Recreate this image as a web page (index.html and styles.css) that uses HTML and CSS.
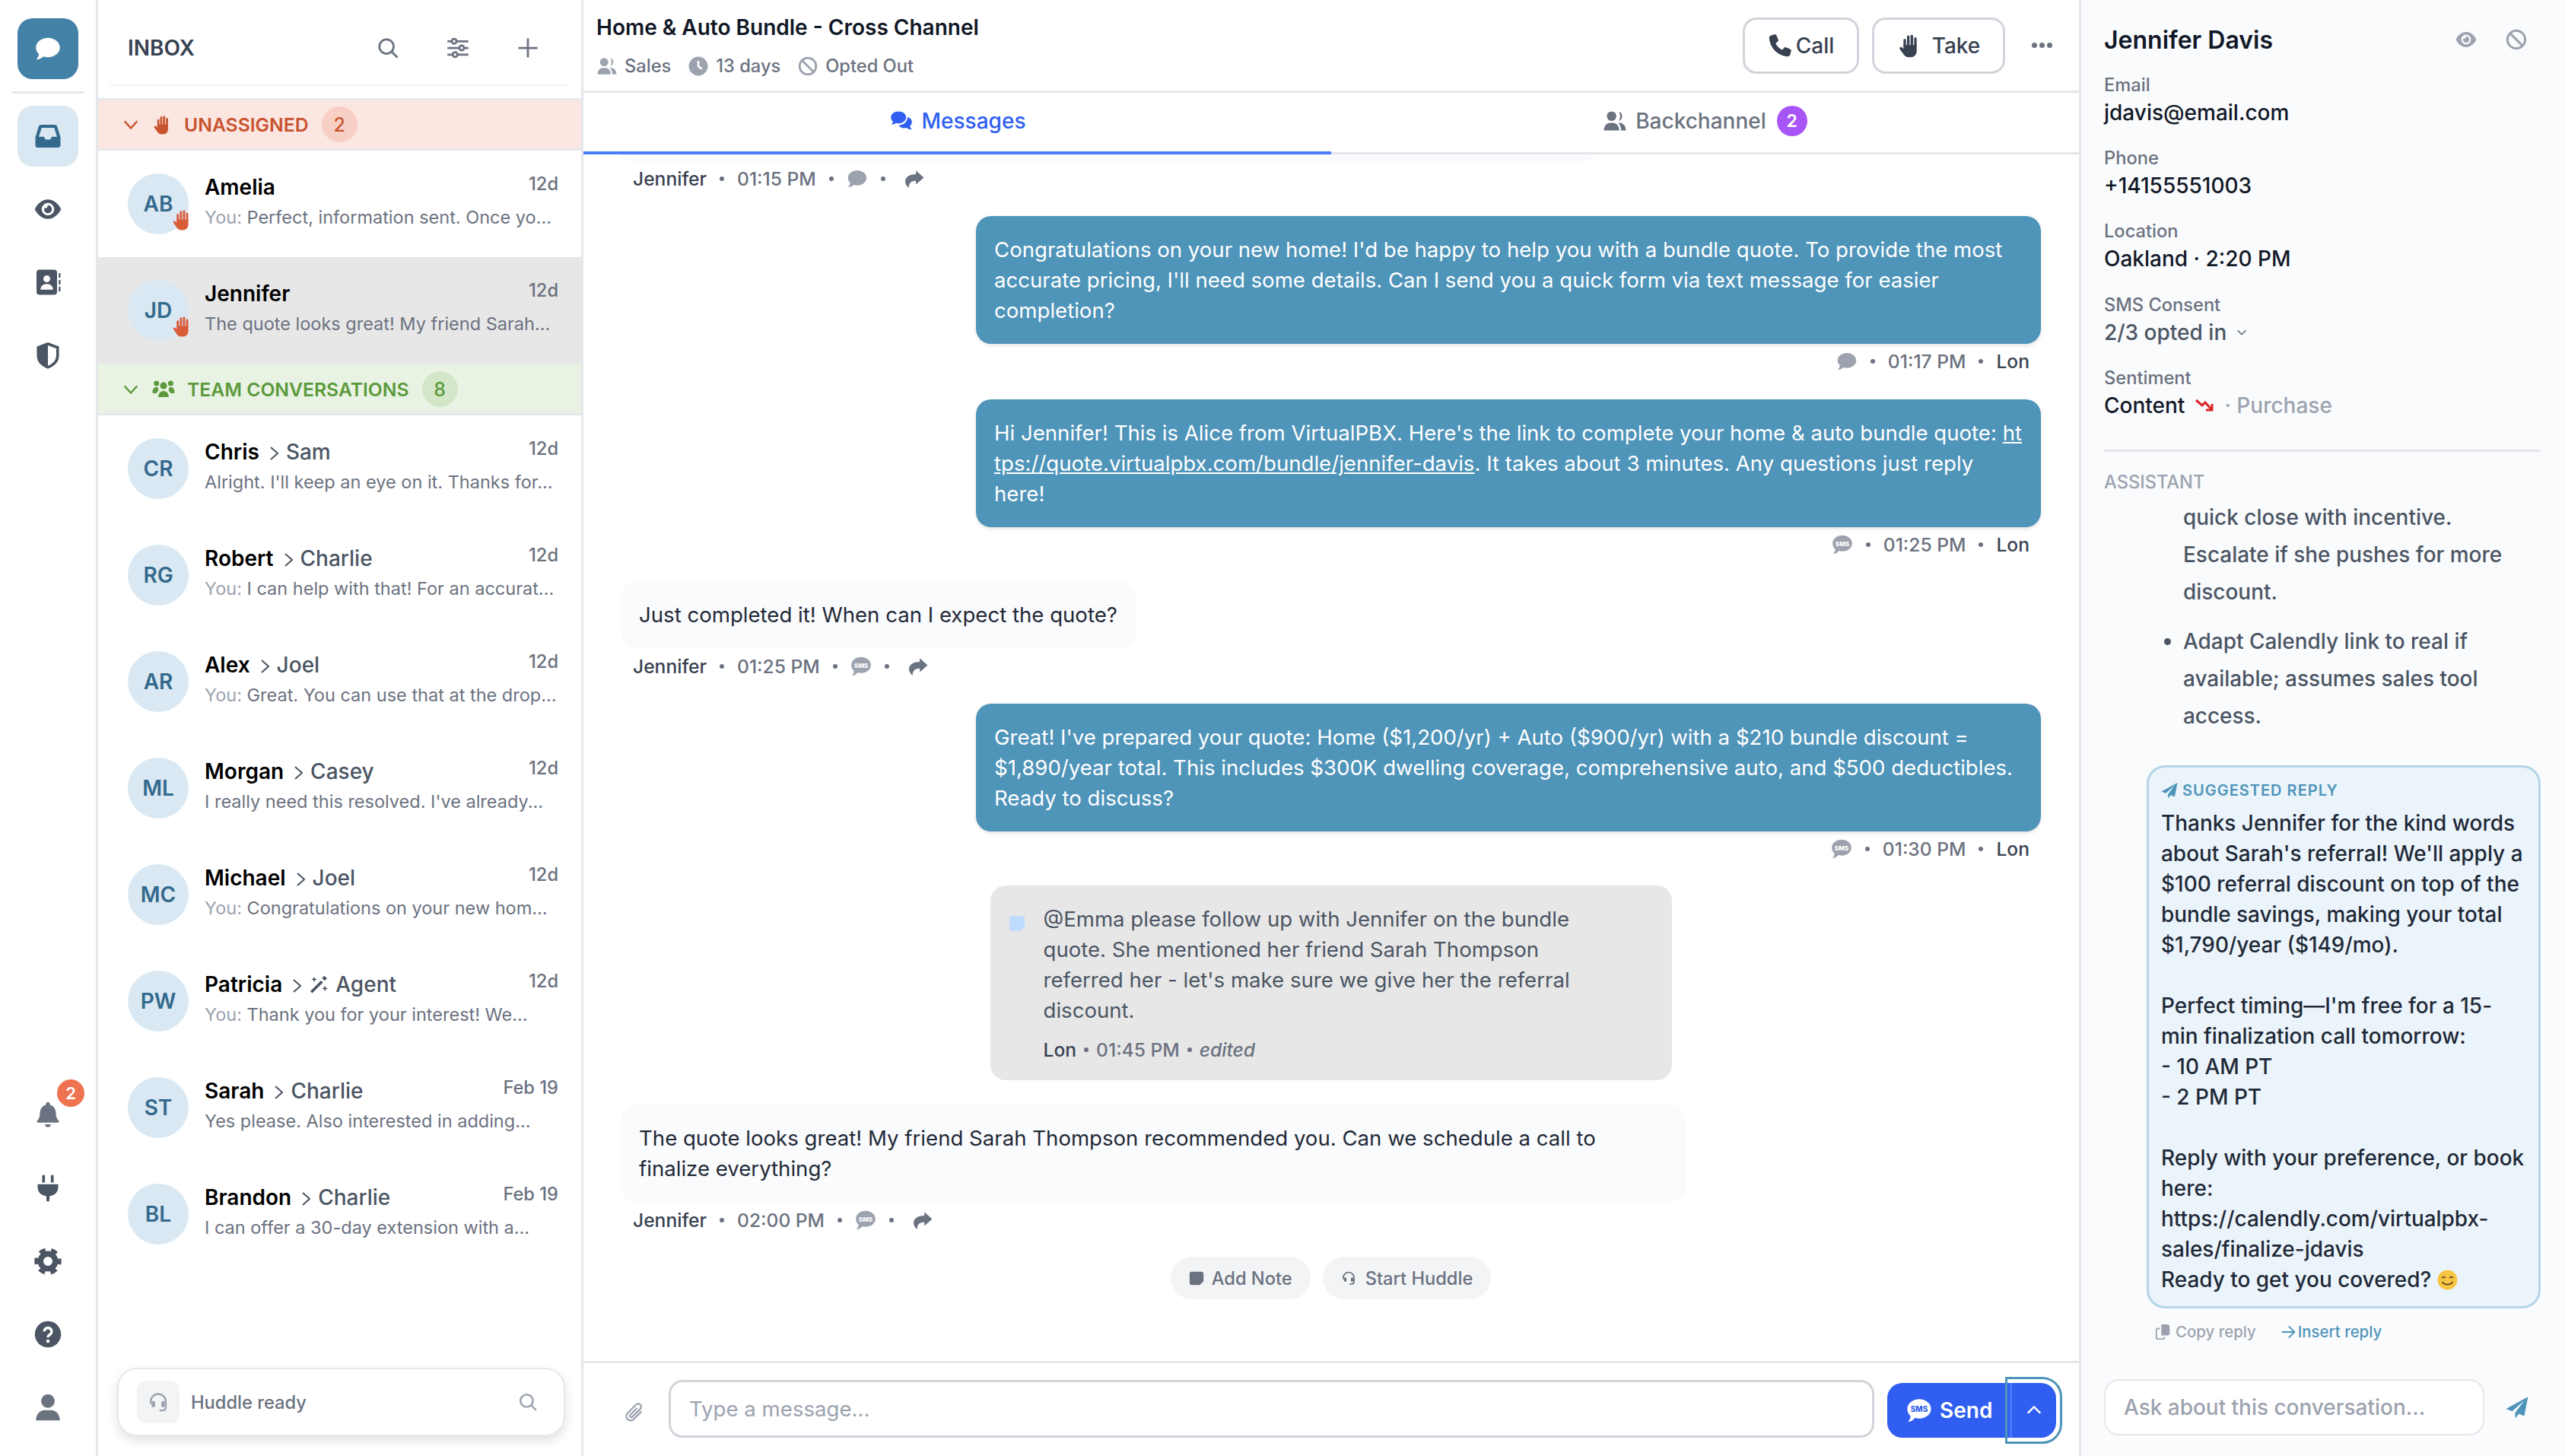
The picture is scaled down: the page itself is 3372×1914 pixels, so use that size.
FILE: index.html
```html
<!DOCTYPE html>
<html lang="en">
<head>
    <meta charset="UTF-8">
    <title>Inbox</title>
    <link rel="stylesheet" href="styles.css">
</head>
<body>
    <svg class="defs">
        <symbol id="i-comment" viewBox="0 0 24 24"><path d="M12 2.500c5.700 0 10.500 3.700 10.500 8.500s-4.800 8.500-10.500 8.500c-1.300 0-2.600-.2-3.700-.6C6.900 20 4.800 21.500 2.300 21.500c-.3 0-.4-.3-.2-.5 1-1.100 1.700-2.600 2-4.200C2.500 15.300 1.500 13.300 1.500 11c0-4.800 4.800-8.500 10.500-8.500z"/></symbol>
        <symbol id="i-sms" viewBox="0 0 24 24"><path d="M12 1.500c6 0 11 3.900 11 9s-5 9-11 9c-1.300 0-2.600-.2-3.700-.6C6.900 20.500 4.800 22.500 2.300 22.500c-.3 0-.4-.3-.2-.5 1-1.100 1.700-3 2-4.700C2.200 15.700 1 13.300 1 10.500c0-5.100 5-9 11-9z"/><text class="sms-text" x="12" y="13.300" text-anchor="middle">SMS</text></symbol>
        <symbol id="i-inbox" viewBox="0 0 24 24"><path fill-rule="evenodd" d="M6 2h12c1 0 1.800.6 2.100 1.500L23 13v7c0 1.200-1 2-2 2H3c-1 0-2-.8-2-2v-7l2.900-9.500C4.200 2.600 5 2 6 2zm.5 2.700L4 12.500h4.500l1.500 2.500h4l1.500-2.500H20l-2.500-7.800z"/></symbol>
        <symbol id="i-eye" viewBox="0 0 24 24"><path fill-rule="evenodd" d="M12 3.500C6 3.500 2 8.500.5 12 2 15.500 6 20.500 12 20.500s10-5 11.500-8.500C22 8.500 18 3.500 12 3.500zm0 3a5.500 5.500 0 1 1 0 11 5.500 5.500 0 0 1 0-11z"/><path d="M12 8.500a3.500 3.500 0 1 1-3.300 2.400c.7.600 2.200.300 2.600-.400.300-.5.300-1.300.700-2z"/></symbol>
        <symbol id="i-book" viewBox="0 0 24 24"><path fill-rule="evenodd" d="M4.500 1h13C19 1 20 2 20 3.500v17c0 1.500-1 2.500-2.500 2.500h-13C3 23 2 22 2 20.500v-17C2 2 3 1 4.500 1zM11 6a3 3 0 1 0 0 6 3 3 0 0 0 0-6zM5.500 18.500h11c0-3-2.200-5-5.500-5s-5.500 2-5.500 5z"/><path d="M21.500 4h1.500v4h-1.500zM21.500 10h1.500v4h-1.500zM21.500 16h1.500v4h-1.500z"/></symbol>
        <symbol id="i-shield" viewBox="0 0 24 24"><path d="M12 2 3.500 5.200v7C3.500 17 7 20.600 12 22.500c5-1.900 8.500-5.500 8.500-10.300v-7z" fill="none" stroke="currentColor" stroke-width="2.400"/><path d="M12 2 3.500 5.200v7C3.500 17 7 20.600 12 22.500z"/></symbol>
        <symbol id="i-bell" viewBox="0 0 24 24"><path d="M12 .5a1.800 1.800 0 0 0-1.700 2.300C7 3.700 5 6.700 5 10.300c0 3.200-1 5-2.400 6.500-.6.700-.2 1.700.8 1.700h17.200c1 0 1.400-1 .8-1.700C20 15.300 19 13.500 19 10.300c0-3.600-2-6.600-5.300-7.500A1.800 1.800 0 0 0 12 .5zM9.500 20a2.500 2.500 0 0 0 5 0z"/></symbol>
        <symbol id="i-plug" viewBox="0 0 24 24"><path d="M7 .5h2.400v6.500H7zM14.600.5H17v6.500h-2.400zM3 8.500h18v2.500c0 4.300-2.900 7.300-7.500 7.900L13.200 23.500h-2.400L10.500 18.900C5.900 18.300 3 15.300 3 11z"/></symbol>
        <symbol id="i-gear" viewBox="0 0 24 24"><circle cx="12" cy="12" r="6.500" fill="none" stroke="currentColor" stroke-width="5"/><circle cx="12" cy="12" r="10" fill="none" stroke="currentColor" stroke-width="3.600" stroke-dasharray="5.500 4.970" stroke-dashoffset="2.750"/></symbol>
        <symbol id="i-help" viewBox="0 0 24 24"><circle cx="12" cy="12" r="11.500"/><path d="M8.800 9.500A3.200 3.200 0 1 1 13.800 12.200c-1.100.7-1.800 1.200-1.800 2.400" fill="none" stroke="#fff" stroke-width="2.300"/><circle cx="12" cy="18" r="1.500" fill="#fff"/></symbol>
        <symbol id="i-user" viewBox="0 0 24 24"><circle cx="12" cy="6.500" r="6"/><path d="M1.500 23.500c0-5.800 3.800-9 7.500-9h6c3.700 0 7.500 3.200 7.500 9z"/></symbol>
        <symbol id="i-hand" viewBox="0 0 24 24"><path d="M7.500 13V6.500M11 11V3.200M14.500 11V2.500M18 12V5" fill="none" stroke="currentColor" stroke-width="2.500" stroke-linecap="round"/><path d="M6.300 11.500h13v6c0 3.500-2.700 6-6 6h-1.700c-2.500 0-4-1-5.200-2.800l-3.800-5.400c-.8-1.200.8-2.700 2.100-1.600l1.600 1.500z"/></symbol>
        <symbol id="i-team" viewBox="0 0 24 24"><circle cx="12" cy="8" r="3.600"/><circle cx="4.500" cy="5.500" r="2.800"/><circle cx="19.500" cy="5.500" r="2.800"/><path d="M6.500 20c0-4 2.200-6.500 5.500-6.500s5.500 2.500 5.500 6.500zM.5 14c0-2.500 1.500-4.500 4-4.500.8 0 1.400.2 2 .5-.5 1-.3 2.200.5 3.200-1.100.5-2 1.400-2.300 2.800H1.500c-.6 0-1-.3-1-.8zM23.500 14c0-2.500-1.500-4.500-4-4.500-.8 0-1.400.2-2 .5.500 1 .3 2.200-.5 3.200 1.100.5 2 1.400 2.300 2.800h3.200c.6 0 1-.3 1-.8z"/></symbol>
        <symbol id="i-users" viewBox="0 0 24 24"><circle cx="8.500" cy="7" r="5"/><path d="M16 2.200a5 5 0 0 1 0 9.600c1-1.400 1.500-3 1.500-4.800S17 3.600 16 2.200zM.5 22c0-5 3-8 6.500-8h3c3.500 0 6.500 3 6.500 8zM18.500 22c0-3.200-1-6-3-8h1.500c3.500 0 6.500 3 6.500 8z"/></symbol>
        <symbol id="i-clock" viewBox="0 0 24 24"><circle cx="12" cy="12" r="11.500"/><path d="M12 5.500V12l4.500 3.500" fill="none" stroke="#fff" stroke-width="2.400"/></symbol>
        <symbol id="i-ban" viewBox="0 0 24 24"><circle cx="12" cy="12" r="10" fill="none" stroke="currentColor" stroke-width="2.600"/><path d="M5 5l14 14" stroke="currentColor" stroke-width="2.600"/></symbol>
        <symbol id="i-comments" viewBox="0 0 24 24"><path d="M9 2c4.700 0 8 2.800 8 6.200s-3.300 6.300-8 6.300c-1 0-1.800-.1-2.600-.4C5.200 15 3.700 15.500 1.500 15.500c1-.9 1.500-2 1.600-3C1.700 11.500 1 10 1 8.200 1 4.800 4.300 2 9 2z"/><path d="M18.500 8c2.700.6 4.500 2.700 4.500 5.200 0 1.600-.7 3-1.900 4 .1 1.200.7 2.500 1.900 3.800-2.300 0-4.200-.7-5.400-1.800-.7.200-1.500.3-2.300.3-2.700 0-5-1.200-6.300-3 5 0 9.500-3.500 9.500-8.500z"/></symbol>
        <symbol id="i-phone" viewBox="0 0 24 24"><path d="M6.500 1 3 2C1.800 2.400 1.300 3.400 1.400 4.600 2.300 14.300 9.700 21.700 19.400 22.600c1.200.1 2.200-.4 2.600-1.600l1-3.500c.2-.9-.2-1.700-1-2.100l-4.100-1.700c-.7-.3-1.500-.1-2 .5l-1.700 2.100c-2.900-1.400-5.100-3.600-6.500-6.500l2.100-1.700c.6-.5.8-1.300.5-2L8.600 2c-.4-.8-1.200-1.200-2.100-1z"/></symbol>
        <symbol id="i-reply" viewBox="0 0 24 24"><path d="M14 2l9.500 8.500L14 19v-4.500c-5.500 0-8.500 2-8.800 8.500C2 20.500.5 17 1 14c.8-4.500 6-7.500 13-7.500z"/></symbol>
        <symbol id="i-clip" viewBox="0 0 24 24"><path d="M20 11.500 11.500 20c-2.200 2.200-5.300 2.200-7.200.3-1.900-1.900-1.900-5 .3-7.200l9-9c1.500-1.500 3.700-1.500 5-.2 1.300 1.300 1.300 3.500-.2 5l-8.600 8.600c-.7.700-1.800.7-2.400.1-.6-.6-.6-1.700.1-2.400l7.500-7.500" fill="none" stroke="currentColor" stroke-width="2"/></symbol>
        <symbol id="i-plane" viewBox="0 0 24 24"><path d="M23.500 1 .5 13.500l6.200 2.600L19.500 5 10 17.500v6l3.900-4.700 5.600 2.400z"/></symbol>
        <symbol id="i-copy" viewBox="0 0 24 24"><path d="M9 1h9c1.700 0 3 1.300 3 3v10c0 1.700-1.300 3-3 3H9z"/><path d="M7 7H4.500C3 7 2 8 2 9.500v10C2 21 3 22 4.500 22H11c1.500 0 2.500-1 2.500-2.500V19" fill="none" stroke="currentColor" stroke-width="2"/></symbol>
        <symbol id="i-wand" viewBox="0 0 24 24"><path d="M3 21.500 16 8.500" stroke="currentColor" stroke-width="3.400"/><path d="M18.500 1.500l3.500 3-2.500 3-3.500-3zM6.500 2.500l1 2.500 2.500 1-2.500 1-1 2.500-1-2.500L3 6l2.500-1zM19.500 13.500l1 2.500 2.500 1-2.500 1-1 2.500-1-2.500-2.500-1 2.500-1z"/></symbol>
        <symbol id="i-headset" viewBox="0 0 24 24"><path d="M3.500 14v-2.500a8.500 8.500 0 0 1 17 0V18c0 2.500-2 3.500-4 3.500h-3" fill="none" stroke="currentColor" stroke-width="2"/><rect x="4.500" y="11" width="4" height="7" rx="2"/><rect x="15.500" y="11" width="4" height="7" rx="2"/></symbol>
    </svg>

    <div class="app">
        <nav class="rail">
            <a class="rail-btn rail-btn-brand"><svg class="rail-ic"><use href="#i-comment"/></svg></a>
            <div class="rail-line"></div>
            <a class="rail-btn rail-btn-active"><svg class="rail-ic"><use href="#i-inbox"/></svg></a>
            <a class="rail-btn"><svg class="rail-ic"><use href="#i-eye"/></svg></a>
            <a class="rail-btn"><svg class="rail-ic"><use href="#i-book"/></svg></a>
            <a class="rail-btn"><svg class="rail-ic"><use href="#i-shield"/></svg></a>
            <div class="rail-bottom">
                <a class="rail-btn rail-btn-grey"><svg class="rail-ic"><use href="#i-bell"/></svg><span class="rail-badge">2</span></a>
                <a class="rail-btn"><svg class="rail-ic"><use href="#i-plug"/></svg></a>
                <a class="rail-btn"><svg class="rail-ic"><use href="#i-gear"/></svg></a>
                <a class="rail-btn"><svg class="rail-ic"><use href="#i-help"/></svg></a>
                <a class="rail-btn rail-btn-grey"><svg class="rail-ic"><use href="#i-user"/></svg></a>
            </div>
        </nav>

        <aside class="inbox">
            <div class="inbox-head">
                <h2>INBOX</h2>
                <div class="inbox-tools">
                    <svg viewBox="0 0 24 24" class="tool-ic"><circle cx="10.500" cy="10.500" r="7.500"/><path d="M16 16l6 6"/></svg>
                    <svg viewBox="0 0 24 24" class="tool-ic"><path d="M1 5h22M1 12h22M1 19h22"/><circle cx="8" cy="5" r="2.500" fill="#fff"/><circle cx="16" cy="12" r="2.500" fill="#fff"/><circle cx="9" cy="19" r="2.500" fill="#fff"/></svg>
                    <svg viewBox="0 0 24 24" class="tool-ic"><path d="M12 2v20M2 12h20"/></svg>
                </div>
            </div>

            <div class="section section-red">
                <svg viewBox="0 0 24 24" class="section-chev"><path d="M3 7l9 10 9-10"/></svg>
                <svg class="section-ic"><use href="#i-hand"/></svg>
                <span>UNASSIGNED</span>
                <b class="section-count">2</b>
            </div>
            <div class="conv">
                <div class="avatar">AB<svg class="avatar-hand"><use href="#i-hand"/></svg></div>
                <div class="conv-body">
                    <div class="conv-top"><span class="conv-name">Amelia</span><time>12d</time></div>
                    <p class="conv-text"><span class="you">You:</span> Perfect, information sent. Once yo...</p>
                </div>
            </div>
            <div class="conv conv-selected">
                <div class="avatar">JD<svg class="avatar-hand"><use href="#i-hand"/></svg></div>
                <div class="conv-body">
                    <div class="conv-top"><span class="conv-name">Jennifer</span><time>12d</time></div>
                    <p class="conv-text">The quote looks great! My friend Sarah...</p>
                </div>
            </div>

            <div class="section section-green">
                <svg viewBox="0 0 24 24" class="section-chev"><path d="M3 7l9 10 9-10"/></svg>
                <svg class="section-ic section-ic-wide"><use href="#i-team"/></svg>
                <span>TEAM CONVERSATIONS</span>
                <b class="section-count">8</b>
            </div>
            <div class="conv">
                <div class="avatar">CR</div>
                <div class="conv-body">
                    <div class="conv-top"><span class="conv-name">Chris</span><svg viewBox="6 2 12 20" class="conv-chev"><path d="M7 3l10 9-10 9"/></svg><span class="conv-to">Sam</span><time>12d</time></div>
                    <p class="conv-text">Alright. I'll keep an eye on it. Thanks for...</p>
                </div>
            </div>
            <div class="conv">
                <div class="avatar">RG</div>
                <div class="conv-body">
                    <div class="conv-top"><span class="conv-name">Robert</span><svg viewBox="6 2 12 20" class="conv-chev"><path d="M7 3l10 9-10 9"/></svg><span class="conv-to">Charlie</span><time>12d</time></div>
                    <p class="conv-text"><span class="you">You:</span> I can help with that! For an accurat...</p>
                </div>
            </div>
            <div class="conv">
                <div class="avatar">AR</div>
                <div class="conv-body">
                    <div class="conv-top"><span class="conv-name">Alex</span><svg viewBox="6 2 12 20" class="conv-chev"><path d="M7 3l10 9-10 9"/></svg><span class="conv-to">Joel</span><time>12d</time></div>
                    <p class="conv-text"><span class="you">You:</span> Great. You can use that at the drop...</p>
                </div>
            </div>
            <div class="conv">
                <div class="avatar">ML</div>
                <div class="conv-body">
                    <div class="conv-top"><span class="conv-name">Morgan</span><svg viewBox="6 2 12 20" class="conv-chev"><path d="M7 3l10 9-10 9"/></svg><span class="conv-to">Casey</span><time>12d</time></div>
                    <p class="conv-text">I really need this resolved. I've already...</p>
                </div>
            </div>
            <div class="conv">
                <div class="avatar">MC</div>
                <div class="conv-body">
                    <div class="conv-top"><span class="conv-name">Michael</span><svg viewBox="6 2 12 20" class="conv-chev"><path d="M7 3l10 9-10 9"/></svg><span class="conv-to">Joel</span><time>12d</time></div>
                    <p class="conv-text"><span class="you">You:</span> Congratulations on your new hom...</p>
                </div>
            </div>
            <div class="conv">
                <div class="avatar">PW</div>
                <div class="conv-body">
                    <div class="conv-top"><span class="conv-name">Patricia</span><svg viewBox="6 2 12 20" class="conv-chev"><path d="M7 3l10 9-10 9"/></svg><svg class="conv-wand"><use href="#i-wand"/></svg><span class="conv-to">Agent</span><time>12d</time></div>
                    <p class="conv-text"><span class="you">You:</span> Thank you for your interest! We...</p>
                </div>
            </div>
            <div class="conv">
                <div class="avatar">ST</div>
                <div class="conv-body">
                    <div class="conv-top"><span class="conv-name">Sarah</span><svg viewBox="6 2 12 20" class="conv-chev"><path d="M7 3l10 9-10 9"/></svg><span class="conv-to">Charlie</span><time>Feb 19</time></div>
                    <p class="conv-text">Yes please. Also interested in adding...</p>
                </div>
            </div>
            <div class="conv">
                <div class="avatar">BL</div>
                <div class="conv-body">
                    <div class="conv-top"><span class="conv-name">Brandon</span><svg viewBox="6 2 12 20" class="conv-chev"><path d="M7 3l10 9-10 9"/></svg><span class="conv-to">Charlie</span><time>Feb 19</time></div>
                    <p class="conv-text">I can offer a 30-day extension with a...</p>
                </div>
            </div>

            <div class="huddle">
                <span class="huddle-box"><svg class="huddle-ic"><use href="#i-headset"/></svg></span>
                <span class="huddle-text">Huddle ready</span>
                <svg viewBox="0 0 24 24" class="huddle-search"><circle cx="10.500" cy="10.500" r="7.500"/><path d="M16 16l6 6"/></svg>
            </div>
        </aside>

        <main class="main">
            <header class="main-head">
                <div>
                    <h1>Home &amp; Auto Bundle - Cross Channel</h1>
                    <div class="main-meta">
                        <span><svg class="meta-ic"><use href="#i-users"/></svg>Sales</span>
                        <span><svg class="meta-ic"><use href="#i-clock"/></svg>13 days</span>
                        <span><svg class="meta-ic"><use href="#i-ban"/></svg>Opted Out</span>
                    </div>
                </div>
                <div class="main-actions">
                    <button class="btn btn-call"><svg class="btn-ic"><use href="#i-phone"/></svg>Call</button>
                    <button class="btn btn-take"><svg class="btn-ic"><use href="#i-hand"/></svg>Take</button>
                    <span class="more"><i></i><i></i><i></i></span>
                </div>
            </header>

            <div class="tabs">
                <div class="tab tab-active"><svg class="tab-ic"><use href="#i-comments"/></svg>Messages</div>
                <div class="tab"><svg class="tab-ic"><use href="#i-users"/></svg>Backchannel<b class="tab-count">2</b></div>
            </div>

            <div class="thread">
                <div class="stub"></div>
                <div class="meta">
                    <span class="meta-who">Jennifer</span><i class="dot"></i><span>01:15 PM</span><i class="dot"></i><svg class="meta-sms"><use href="#i-comment"/></svg><i class="dot"></i><svg class="meta-reply"><use href="#i-reply"/></svg>
                </div>

                <div class="msg msg-out">
                    <div class="bubble">Congratulations on your new home! I'd be happy to help you with a bundle quote. To provide the most accurate pricing, I'll need some details. Can I send you a quick form via text message for easier completion?</div>
                    <div class="meta"><svg class="meta-sms"><use href="#i-comment"/></svg><i class="dot"></i><span>01:17 PM</span><i class="dot"></i><span class="meta-who">Lon</span></div>
                </div>

                <div class="msg msg-out">
                    <div class="bubble">Hi Jennifer! This is Alice from VirtualPBX. Here's the link to complete your home &amp; auto bundle quote: <u>ht</u><wbr><u>tps://quote.virtualpbx.com/bundle/jennifer-davis</u>. It takes about 3 minutes. Any questions just reply here!</div>
                    <div class="meta"><svg class="meta-sms"><use href="#i-sms"/></svg><i class="dot"></i><span>01:25 PM</span><i class="dot"></i><span class="meta-who">Lon</span></div>
                </div>

                <div class="msg msg-in">
                    <div class="bubble">Just completed it! When can I expect the quote?</div>
                    <div class="meta"><span class="meta-who">Jennifer</span><i class="dot"></i><span>01:25 PM</span><i class="dot"></i><svg class="meta-sms"><use href="#i-sms"/></svg><i class="dot"></i><svg class="meta-reply"><use href="#i-reply"/></svg></div>
                </div>

                <div class="msg msg-out">
                    <div class="bubble">Great! I've prepared your quote: Home ($1,200/yr) + Auto ($900/yr) with a $210 bundle discount = $1,890/year total. This includes $300K dwelling coverage, comprehensive auto, and $500 deductibles. Ready to discuss?</div>
                    <div class="meta"><svg class="meta-sms"><use href="#i-sms"/></svg><i class="dot"></i><span>01:30 PM</span><i class="dot"></i><span class="meta-who">Lon</span></div>
                </div>

                <div class="note">
                    <svg viewBox="0 0 24 24" class="note-ic"><path d="M4 1h16c1.700 0 3 1.300 3 3v13l-7 6H4c-1.700 0-3-1.300-3-3V4c0-1.700 1.300-3 3-3z"/></svg>
                    <div class="note-body">
                        <p>@Emma please follow up with Jennifer on the bundle quote. She mentioned her friend Sarah Thompson referred her - let's make sure we give her the referral discount.</p>
                        <div class="note-meta"><span class="meta-who">Lon</span><i class="dot"></i><span>01:45 PM</span><i class="dot"></i><em>edited</em></div>
                    </div>
                </div>

                <div class="msg msg-in">
                    <div class="bubble bubble-wide">The quote looks great! My friend Sarah Thompson recommended you. Can we schedule a call to finalize everything?</div>
                    <div class="meta"><span class="meta-who">Jennifer</span><i class="dot"></i><span>02:00 PM</span><i class="dot"></i><svg class="meta-sms"><use href="#i-sms"/></svg><i class="dot"></i><svg class="meta-reply"><use href="#i-reply"/></svg></div>
                </div>

                <div class="pills">
                    <span class="pill"><svg viewBox="0 0 24 24" class="pill-ic"><path d="M4 2h16c1.700 0 3 1.300 3 3v12l-6 6H4c-1.700 0-3-1.300-3-3V5c0-1.700 1.300-3 3-3z"/></svg>Add Note</span>
                    <span class="pill"><svg class="pill-ic pill-ic-wide"><use href="#i-headset"/></svg>Start Huddle</span>
                </div>
            </div>

            <div class="composer">
                <svg class="clip"><use href="#i-clip"/></svg>
                <input class="composer-input" type="text" placeholder="Type a message...">
                <div class="send">
                    <button class="send-main"><svg class="send-ic"><use href="#i-sms"/></svg>Send</button>
                    <button class="send-more"><svg viewBox="0 0 24 24" class="send-chev"><path d="M3 17l9-9 9 9"/></svg></button>
                </div>
            </div>
        </main>

        <aside class="details">
            <div class="details-head">
                <h2>Jennifer Davis</h2>
                <svg class="details-ic"><use href="#i-eye"/></svg>
                <svg class="details-ic"><use href="#i-ban"/></svg>
            </div>
            <div class="field"><label>Email</label><div>jdavis@email.com</div></div>
            <div class="field"><label>Phone</label><div>+14155551003</div></div>
            <div class="field"><label>Location</label><div>Oakland · 2:20 PM</div></div>
            <div class="field"><label>SMS Consent</label><div class="consent">2/3 opted in<svg viewBox="0 0 24 24" class="consent-chev"><path d="M4 8l8 8 8-8"/></svg></div></div>
            <div class="field"><label>Sentiment</label><div>Content<svg viewBox="0 0 24 24" class="trend"><path d="M1 5l8 7 4-4 9 10M22 10v8h-8"/></svg><span class="purchase">· Purchase</span></div></div>
            <div class="details-line"></div>
            <div class="assistant-label">ASSISTANT</div>
            <div class="assistant">
                <p class="assistant-text">quick close with incentive. Escalate if she pushes for more discount.</p>
                <ul class="assistant-list"><li>Adapt Calendly link to real if available; assumes sales tool access.</li></ul>
                <div class="suggest">
                    <div class="suggest-head"><svg class="suggest-ic"><use href="#i-plane"/></svg>SUGGESTED REPLY</div>
                    <p>Thanks Jennifer for the kind words about Sarah's referral! We'll apply a $100 referral discount on top of the bundle savings, making your total $1,790/year ($149/mo).

Perfect timing—I'm free for a 15-min finalization call tomorrow:
- 10 AM PT
- 2 PM PT

Reply with your preference, or book here:
https://calendly.com/virtualpbx-sales/finalize-jdavis
Ready to get you covered? <svg viewBox="0 0 24 24" class="smile"><circle cx="12" cy="12" r="11.500" fill="#f7c544"/><path d="M5.500 10c1-2 3-2 4 0M14.500 10c1-2 3-2 4 0" fill="none" stroke="#5b3a1a" stroke-width="1.400"/><path d="M6 14c1.500 4.500 10.500 4.500 12 0" fill="none" stroke="#5b3a1a" stroke-width="1.500"/></svg></p>
                </div>
                <div class="suggest-actions">
                    <span class="copy"><svg class="action-ic"><use href="#i-copy"/></svg>Copy reply</span>
                    <span class="insert"><svg viewBox="0 0 24 24" class="action-arrow"><path d="M2 12h20M13 3l9 9-9 9"/></svg>Insert reply</span>
                </div>
            </div>
            <div class="ask">
                <input class="ask-input" type="text" placeholder="Ask about this conversation...">
                <svg class="ask-ic"><use href="#i-plane"/></svg>
            </div>
        </aside>
    </div>
</body>
</html>
```

FILE: styles.css
```css
* {
    box-sizing: border-box;
}

body {
    margin: 0;
    font-family: Inter, "Noto Sans", sans-serif;
    color: #111827;
    background: #fff;
    overflow: hidden;
}

svg {
    fill: currentColor;
    flex: none;
}

p, h1, h2, ul {
    margin: 0;
    padding: 0;
}

.defs {
    display: none;
}

.sms-text {
    font-size: 7px;
    font-weight: 800;
    fill: var(--sms-text, #fff);
}

.app {
    display: flex;
    width: 3372px;
    height: 1914px;
}

/* left icon rail */
.rail {
    width: 129px;
    flex: none;
    display: flex;
    flex-direction: column;
    align-items: center;
    padding-top: 24px;
    border-right: 3px solid #e5e7eb;
    color: #4b5563;
}

.rail-btn {
    position: relative;
    width: 80px;
    height: 80px;
    margin-bottom: 16px;
    border-radius: 20px;
    display: flex;
    align-items: center;
    justify-content: center;
}

.rail-btn-brand {
    background: #4481a7;
    color: #fff;
    margin-bottom: 0;
}

.rail-btn-active {
    background: #d9e8f2;
    color: #33698d;
}

.rail-btn-grey {
    color: #6b7280;
}

.rail-line {
    width: 94px;
    height: 3px;
    margin: 16px 0;
    background: #e5e7eb;
}

.rail-ic {
    width: 36px;
    height: 36px;
}

.rail-badge {
    position: absolute;
    top: -7px;
    right: -8px;
    width: 36px;
    height: 36px;
    border-radius: 50%;
    background: #ef7350;
    color: #fff;
    font-size: 22px;
    font-weight: 600;
    display: flex;
    align-items: center;
    justify-content: center;
}

.rail-bottom {
    margin-top: auto;
    padding-bottom: 8px;
}

/* inbox list */
.inbox {
    width: 638px;
    flex: none;
    display: flex;
    flex-direction: column;
    border-right: 3px solid #e5e7eb;
}

.inbox-head {
    height: 113px;
    margin: 0 16px 16px 15px;
    padding: 14px 24px 0;
    flex: none;
    display: flex;
    align-items: center;
    justify-content: space-between;
    border-bottom: 2px solid #f0f1f3;
}

.inbox-head h2 {
    font-size: 28px;
    font-weight: 600;
    color: #374151;
}

.inbox-tools {
    display: flex;
    gap: 62px;
    margin-right: 15px;
}

.tool-ic {
    width: 30px;
    height: 30px;
    fill: none;
    stroke: #6b7280;
    stroke-width: 2.200;
}

.section {
    height: 69px;
    flex: none;
    display: flex;
    align-items: center;
    padding-left: 32px;
    border-top: 3px solid #e5e7eb;
    border-bottom: 3px solid #e5e7eb;
    font-size: 24.700px;
    font-weight: 600;
}

.section-red {
    background: #fbe6e1;
    color: #c8532f;
}

.section-green {
    height: 68px;
    padding-top: 2px;
    background: #e9f3e4;
    color: #5b9a3c;
    border-top: none;
}

.section-chev {
    width: 22px;
    height: 22px;
    margin-right: 17px;
    fill: none;
    stroke: currentColor;
    stroke-width: 2.600;
}

.section-ic {
    width: 26px;
    height: 30px;
    margin-right: 16px;
}

.section-ic-wide {
    width: 30px;
    margin-right: 16px;
}

.section-count {
    width: 47px;
    height: 47px;
    margin-left: 17px;
    border-radius: 50%;
    font-size: 25px;
    font-weight: 500;
    display: flex;
    align-items: center;
    justify-content: center;
}

.section-red .section-count {
    background: #f8cfc4;
}

.section-green .section-count {
    background: #d3e6c8;
}

.conv {
    height: 140px;
    flex: none;
    display: flex;
    align-items: flex-start;
    padding: 30px 30px 0 39px;
}

.conv-selected {
    background: #e7e7e7;
}

.avatar {
    position: relative;
    width: 80px;
    height: 80px;
    flex: none;
    margin-right: 21px;
    border-radius: 50%;
    background: #d9e8f2;
    color: #33698d;
    font-size: 28px;
    font-weight: 600;
    display: flex;
    align-items: center;
    justify-content: center;
}

.avatar-hand {
    position: absolute;
    right: -5px;
    bottom: 4px;
    width: 28px;
    height: 30px;
    color: #d95c39;
}

.conv-body {
    flex: 1;
    min-width: 0;
}

.conv-top {
    display: flex;
    align-items: center;
    height: 36px;
}

.conv-name {
    font-size: 28px;
    font-weight: 600;
    color: #000;
}

.conv-chev {
    width: 11px;
    height: 18px;
    margin: 3px 10px 0 14px;
    fill: none;
    stroke: #4b5563;
    stroke-width: 2.200;
}

.conv-wand {
    width: 26px;
    height: 26px;
    margin-right: 9px;
    color: #4b5563;
}

.conv-to {
    font-size: 28px;
    font-weight: 500;
    color: #4b5563;
}

.conv-top time {
    margin: -10px 0 0 auto;
    font-size: 23.650px;
    font-weight: 500;
    color: #6b7280;
}

.conv-text {
    margin-top: 6px;
    font-size: 23.500px;
    line-height: 32px;
    color: #6b7280;
    white-space: nowrap;
}

.you {
    color: #9ca3af;
}

.huddle {
    height: 90px;
    margin: auto 21px 26px 25px;
    padding: 0 32px 0 24px;
    flex: none;
    display: flex;
    align-items: center;
    border: 2px solid #e5e7eb;
    border-radius: 26px;
    box-shadow: 0 6px 14px rgba(0, 0, 0, 0.12);
}

.huddle-box {
    width: 56px;
    height: 56px;
    margin-right: 15px;
    border-radius: 12px;
    background: #f3f4f6;
    color: #9ca3af;
    display: flex;
    align-items: center;
    justify-content: center;
}

.huddle-ic {
    width: 28px;
    height: 28px;
}

.huddle-text {
    flex: 1;
    font-size: 23.650px;
    font-weight: 500;
    color: #6b7280;
}

.huddle-search {
    width: 26px;
    height: 26px;
    margin-right: 2px;
    fill: none;
    stroke: #9ca3af;
    stroke-width: 2.400;
}

/* conversation */
.main {
    flex: 1;
    min-width: 0;
    display: flex;
    flex-direction: column;
}

.main-head {
    height: 122px;
    flex: none;
    padding: 0 35px 0 17px;
    display: flex;
    align-items: center;
    justify-content: space-between;
    border-bottom: 3px solid #e5e7eb;
}

.main-head h1 {
    font-size: 28px;
    font-weight: 600;
    line-height: 36px;
    color: #111827;
}

.main-meta {
    display: flex;
    gap: 22px;
    margin-top: 18px;
    font-size: 23.650px;
    font-weight: 500;
    color: #6b7280;
}

.main-meta span {
    display: flex;
    align-items: center;
}

.meta-ic {
    width: 28px;
    height: 26px;
    margin-right: 9px;
    color: #9ca3af;
}

.main-actions {
    display: flex;
    align-items: center;
}

.btn {
    height: 74px;
    margin-right: 17px;
    border: 3px solid #d1d5db;
    border-radius: 18px;
    background: #fff;
    color: #374151;
    font-family: inherit;
    font-size: 28px;
    font-weight: 500;
    display: flex;
    align-items: center;
    justify-content: center;
}

.btn-call {
    width: 153px;
}

.btn-take {
    width: 175px;
}

.btn-ic {
    width: 32px;
    height: 32px;
    margin-right: 5px;
}

.btn-take .btn-ic {
    margin-right: 14px;
}

.more {
    display: flex;
    gap: 3px;
    margin-left: 18px;
}

.more i {
    width: 7px;
    height: 7px;
    border-radius: 50%;
    background: #6b7280;
}

.tabs {
    height: 81px;
    flex: none;
    display: flex;
    border-bottom: 3px solid #e5e7eb;
}

.tab {
    flex: 1;
    display: flex;
    align-items: center;
    justify-content: center;
    margin-bottom: -3px;
    padding-bottom: 3px;
    border-bottom: 4px solid transparent;
    font-size: 28px;
    font-weight: 500;
    color: #6b7280;
}

.tab-active {
    color: #2f5ef0;
    border-bottom-color: #4a7cff;
}

.tab-ic {
    width: 32px;
    height: 30px;
    margin-right: 11px;
}

.tab-count {
    width: 40px;
    height: 40px;
    margin-left: 14px;
    border-radius: 50%;
    background: #a855f7;
    color: #fff;
    font-size: 23px;
    font-weight: 600;
    display: flex;
    align-items: center;
    justify-content: center;
}

.thread {
    flex: 1;
    min-height: 0;
    padding: 0 50px 0 49px;
    overflow: hidden;
}

.stub {
    height: 9px;
    width: 1279px;
    background: #fafbfd;
    border-radius: 0 0 20px 20px;
}

.msg {
    display: flex;
    flex-direction: column;
}

.msg-out {
    align-items: flex-end;
}

.msg-in {
    align-items: flex-start;
    margin-top: -2px;
}

.bubble {
    padding: 24px;
    font-size: 27.600px;
    line-height: 40px;
    border-radius: 20px;
}

.msg-out .bubble {
    width: 1400px;
    background: #4f94b9;
    color: #fff;
    box-shadow: 0 2px 5px rgba(0, 0, 0, 0.12);
}

.msg-in .bubble {
    background: #fafbfd;
    color: #1f2937;
}

.bubble-wide {
    width: 1400px;
}

.meta {
    height: 46px;
    margin-bottom: 26px;
    padding: 0 16px;
    display: flex;
    align-items: center;
    font-size: 24.600px;
    font-weight: 500;
    color: #6b7280;
}

.msg-out .meta {
    margin-bottom: 27px;
    padding-right: 15px;
}

.msg-in .meta {
    margin-top: 1px;
}

.meta-who {
    color: #374151;
}

.dot {
    width: 6px;
    height: 6px;
    margin: 0 17px;
    border-radius: 50%;
    background: #6b7280;
}

.meta-sms {
    width: 28px;
    height: 28px;
    color: #9ca3af;
}

.meta-reply {
    width: 26px;
    height: 26px;
    margin-left: 8px;
    color: #6b7280;
}

.note {
    width: 896px;
    height: 256px;
    margin: -2px auto 34px;
    padding: 24px;
    display: flex;
    background: #e7e7e7;
    border-radius: 20px;
}

.note-ic {
    width: 22px;
    height: 22px;
    margin: 15px 24px 0 0;
    color: #bfdbfe;
}

.note-body {
    width: 730px;
}

.note-body p {
    font-size: 27.600px;
    line-height: 40px;
    color: #4b5563;
}

.note-meta {
    height: 32px;
    margin-top: 16px;
    display: flex;
    align-items: center;
    font-size: 24.600px;
    font-weight: 500;
    color: #6b7280;
}

.note-meta .dot {
    margin: 0 10px;
}

.pills {
    display: flex;
    justify-content: center;
    gap: 16px;
    margin-top: -1px;
}

.pill {
    height: 56px;
    padding: 0 24px;
    border-radius: 28px;
    background: #f3f4f6;
    font-size: 23.650px;
    font-weight: 500;
    color: #6b7280;
    display: flex;
    align-items: center;
}

.pill-ic {
    width: 20px;
    height: 22px;
    margin-right: 10px;
}

.pill-ic-wide {
    margin-right: 12px;
}

.composer {
    height: 125px;
    flex: none;
    padding: 22px 30px 0 53px;
    display: flex;
    align-items: flex-start;
    border-top: 3px solid #e5e7eb;
}

.clip {
    width: 28px;
    height: 30px;
    margin: 27px 31px 0 0;
    color: #9ca3af;
}

.composer-input {
    flex: 1;
    min-width: 0;
    height: 76px;
    margin-right: 17px;
    padding: 0 24px;
    border: 3px solid #d1d5db;
    border-radius: 18px;
    font-family: inherit;
    font-size: 27.600px;
    outline: none;
}

.composer-input::placeholder,
.ask-input::placeholder {
    color: #9ca3af;
    opacity: 1;
}

.send {
    display: flex;
    margin-top: 4px;
    height: 72px;
}

.send button {
    border: none;
    background: #2f5ef0;
    color: #fff;
    font-family: inherit;
}

.send-main {
    width: 164px;
    padding: 0 0 0 25px;
    border-radius: 20px 0 0 20px;
    font-size: 28px;
    font-weight: 600;
    display: flex;
    align-items: center;
    border-right: 3px solid #4a7cff !important;
    --sms-text: #2f5ef0;
}

.send-ic {
    width: 34px;
    height: 34px;
    margin-right: 10px;
}

.send-more {
    position: relative;
    width: 58px;
    padding: 0;
    border-radius: 0 20px 20px 0;
}

.send-more::after {
    content: "";
    position: absolute;
    top: -8px;
    right: -8px;
    bottom: -8px;
    left: -9px;
    border: 3px solid #4f94b9;
    border-radius: 0 26px 26px 0;
}

.send-chev {
    width: 22px;
    height: 22px;
    fill: none;
    stroke: #fff;
    stroke-width: 2.600;
}

/* right side panel */
.details {
    width: 639px;
    flex: none;
    padding: 0 32px 0 30px;
    display: flex;
    flex-direction: column;
    background: #fafbfd;
    border-left: 3px solid #e5e7eb;
}

.details-head {
    height: 93px;
    padding-top: 11px;
    flex: none;
    display: flex;
    align-items: center;
    color: #9ca3af;
}

.details-head h2 {
    flex: 1;
    font-size: 32px;
    font-weight: 600;
    color: #111827;
}

.details-ic {
    width: 28px;
    height: 28px;
    margin-right: 38px;
}

.details-ic:last-child {
    margin-right: 18px;
}

.field {
    height: 96.200px;
    font-size: 28px;
    font-weight: 500;
    line-height: 38px;
    white-space: nowrap;
}

.field label {
    display: block;
    margin-bottom: -2px;
    font-size: 23.650px;
    line-height: 38px;
    color: #6b7280;
}

.field div {
    display: flex;
    align-items: center;
}

.consent {
    color: #4b5563;
}

.consent-chev {
    width: 16px;
    height: 16px;
    margin-left: 12px;
    fill: none;
    stroke: #6b7280;
    stroke-width: 2.400;
}

.trend {
    width: 28px;
    height: 24px;
    margin: 0 12px;
    fill: none;
    stroke: #dc2626;
    stroke-width: 3;
}

.purchase {
    color: #9ca3af;
}

.details-line {
    height: 3px;
    flex: none;
    margin-top: 17px;
    background: #e5e7eb;
}

.assistant-label {
    margin-top: 25px;
    font-size: 23.650px;
    font-weight: 500;
    line-height: 30px;
    color: #9ca3af;
    flex: none;
}

.assistant {
    flex: 1;
    min-height: 0;
    overflow: hidden;
}

.assistant-text,
.assistant-list {
    padding-left: 104px;
    font-size: 27.950px;
    font-weight: 500;
    line-height: 49.200px;
    color: #4b5563;
}

.assistant-text {
    padding-top: 7px;
}

.assistant-list {
    margin-top: 15px;
}

.suggest {
    margin: 40px 0 0 56px;
    padding: 16px 16px 15px 16px;
    border: 3px solid #b5d5e6;
    border-radius: 24px;
    background: #ebf4fb;
}

.suggest-head {
    display: flex;
    align-items: center;
    font-size: 20px;
    font-weight: 600;
    line-height: 28px;
    letter-spacing: 1px;
    color: #4f94b9;
}

.suggest-ic {
    width: 22px;
    height: 22px;
    margin-right: 6px;
}

.suggest p {
    margin-top: 9px;
    font-size: 27.950px;
    font-weight: 500;
    line-height: 40px;
    color: #1f2937;
    white-space: pre-wrap;
}

.smile {
    width: 27px;
    height: 27px;
    vertical-align: -4px;
}

.suggest-actions {
    display: flex;
    gap: 32px;
    margin: 15px 0 0 67px;
    font-size: 20.400px;
    font-weight: 500;
    line-height: 32px;
}

.suggest-actions span {
    display: flex;
    align-items: center;
}

.copy {
    color: #9ca3af;
}

.insert {
    color: #4f94b9;
}

.action-ic {
    width: 22px;
    height: 22px;
    margin-right: 5px;
}

.action-arrow {
    width: 20px;
    height: 20px;
    margin-right: 3px;
    fill: none;
    stroke: currentColor;
    stroke-width: 2.200;
}

.ask {
    height: 101px;
    flex: none;
    display: flex;
    align-items: flex-start;
}

.ask-input {
    flex: 1;
    min-width: 0;
    height: 74px;
    padding: 0 24px;
    border: 2px solid #e5e7eb;
    border-radius: 20px;
    background: #fff;
    font-family: inherit;
    font-size: 27.950px;
    font-weight: 500;
    outline: none;
}

.ask-ic {
    width: 30px;
    height: 30px;
    margin: 22px 16px 0 28px;
    color: #4f94b9;
}
```
